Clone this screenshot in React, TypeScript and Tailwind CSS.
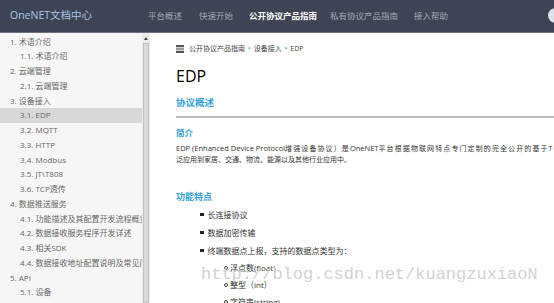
import React from 'react';

const nav = [
  { label: '平台概述', cls: 'ml-0' },
  { label: '快速开始', cls: 'ml-[17px]' },
  { label: '公开协议产品指南', cls: 'ml-[16px] font-bold text-white' },
  { label: '私有协议产品指南', cls: 'ml-[13px]' },
  { label: '接入帮助', cls: 'ml-[16px]' },
];

const toc: { label: string; level: number; active?: boolean }[] = [
  { label: '1. 术语介绍', level: 1 },
  { label: '1.1. 术语介绍', level: 2 },
  { label: '2. 云端管理', level: 1 },
  { label: '2.1. 云端管理', level: 2 },
  { label: '3. 设备接入', level: 1 },
  { label: '3.1. EDP', level: 2, active: true },
  { label: '3.2. MQTT', level: 2 },
  { label: '3.3. HTTP', level: 2 },
  { label: '3.4. Modbus', level: 2 },
  { label: '3.5. JT\\T808', level: 2 },
  { label: '3.6. TCP透传', level: 2 },
  { label: '4. 数据推送服务', level: 1 },
  { label: '4.1. 功能描述及其配置开发流程概览', level: 2 },
  { label: '4.2. 数据接收服务程序开发详述', level: 2 },
  { label: '4.3. 相关SDK', level: 2 },
  { label: '4.4. 数据接收地址配置说明及常见问题', level: 2 },
  { label: '5. API', level: 1 },
  { label: '5.1. 设备', level: 2 },
];

const font = { fontFamily: '"Open Sans", "Noto Sans CJK SC", sans-serif' };

function Sidebar() {
  return (
    <div className="flex h-full w-[150px] shrink-0 bg-[#f6f6f6]">
      <div className="min-w-0 flex-1 overflow-hidden pt-[1.5px]">
        {toc.map((t) => (
          <div
            key={t.label}
            className={`h-[14.75px] overflow-hidden whitespace-nowrap text-[8px] leading-[14.75px] text-[#676767] ${t.level === 1 ? 'pl-[10px]' : 'pl-[20px]'} ${t.active ? 'bg-[#d8d8da]' : ''}`}
          >
            {t.label}
          </div>
        ))}
      </div>
      {/* scrollbar */}
      <div className="flex w-[8px] shrink-0 flex-col bg-[#ececec]">
        <div className="flex h-[10px] items-center justify-center">
          <div className="h-0 w-0 border-x-[2px] border-b-[3px] border-x-transparent border-b-[#444]" />
        </div>
        <div className="mx-[1px] flex-1 border border-[#c2c2c2] bg-[#dadada]" />
      </div>
    </div>
  );
}

export default function App() {
  return (
    <div className="flex h-[303px] w-[554px] flex-col overflow-hidden bg-white" style={font}>
      <header className="relative flex h-[33px] shrink-0 items-center overflow-hidden border-b border-[#6d717c] bg-[#3e4454]">
        <div className="w-[148px] shrink-0 pl-[10px] text-[10.5px] text-[#a9c6e3]">OneNET文档中心</div>
        <nav className="flex items-center text-[8.5px] text-[#a3a9b5]">
          {nav.map((n) => (
            <span key={n.label} className={n.cls}>
              {n.label}
            </span>
          ))}
        </nav>
        <div className="absolute right-[-9px] top-[8px] h-[15px] w-[15px] rounded-full bg-[#dde3ea]" />
      </header>
      <div className="flex min-h-0 flex-1">
        <Sidebar />
        <main className="relative min-w-0 flex-1 overflow-hidden pl-[26px] pt-[11px] text-[#333]">
          <div className="flex h-[10px] items-center gap-[3px] text-[7px] text-[#444]">
            <svg width="8" height="8" viewBox="0 0 8 8" className="mr-[2px]">
              <rect x="0" y="0" width="8" height="2.2" fill="#555" />
              <rect x="0" y="2.9" width="8" height="2.2" fill="#999" />
              <rect x="0" y="5.8" width="8" height="2.2" fill="#555" />
            </svg>
            <span>公开协议产品指南</span>
            <span className="text-[#2ea1d9]">•</span>
            <span>设备接入</span>
            <span className="text-[#2ea1d9]">•</span>
            <span>EDP</span>
          </div>
          <h1 className="mt-[12px] text-[16px] leading-[20px] text-black">EDP</h1>
          <h2 className="mt-[10px] text-[9.5px] font-bold leading-[14px] text-[#2ea1d9]">协议概述</h2>
          <div className="mt-[6px] h-[1.5px] w-[400px] bg-[#bdbdbd]" />
          <h3 className="mt-[9px] text-[8.5px] font-bold leading-[12px] text-[#2ea1d9]">简介</h3>
          <div className="mt-[4.5px] whitespace-nowrap text-[7px] leading-[11px]">
            <div>
              <span className="text-[7.5px]">EDP (Enhanced Device Protocol</span>
              <span className="tracking-[1.1px]">增强设备协议）是</span>
              <span className="text-[7.5px]">OneNET</span>
              <span className="tracking-[1.1px]">平台根据物联网特点专门定制的完全公开的基于TCP协议，可以广</span>
            </div>
            <div>泛应用到家居、交通、物流、能源以及其他行业应用中。</div>
          </div>
          <h3 className="mt-[25px] text-[9px] font-bold leading-[13px] text-[#2ea1d9]">功能特点</h3>
          <ul className="mt-[2.5px] pl-[24px] text-[8px] text-[#333]">
            {['长连接协议', '数据加密传输', '终端数据点上报，支持的数据点类型为：'].map((b) => (
              <li key={b} className="flex h-[18px] items-center gap-[4px]">
                <span className="h-[3.5px] w-[3.5px] shrink-0 bg-[#222]" />
                {b}
              </li>
            ))}
          </ul>
          <ul className="pl-[48px] text-[8px] text-[#333]">
            {['浮点数(float)', '整型（int）', '字符串(string)'].map((b) => (
              <li key={b} className="flex h-[17px] items-center gap-[2px]">
                <span className="h-[4px] w-[4px] shrink-0 rounded-full border border-[#444]" />
                {b}
              </li>
            ))}
          </ul>
          {/* watermark */}
          <div
            className="absolute left-[51px] top-[232px] whitespace-nowrap text-[17px] leading-[20px] text-[#d2d2d2]"
            style={{ fontFamily: '"Liberation Mono", monospace' }}
          >
            http://blog.csdn.net/kuangzuxiaoN
          </div>
        </main>
      </div>
    </div>
  );
}
